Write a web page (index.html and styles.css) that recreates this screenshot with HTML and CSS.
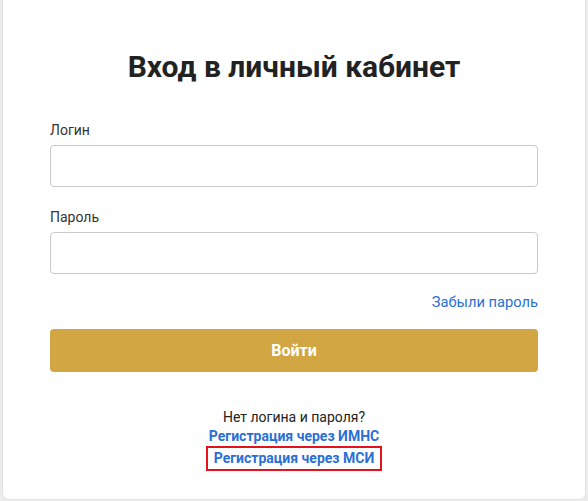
FILE: index.html
```html
<!DOCTYPE html>
<html lang="ru">
<head>
    <meta charset="UTF-8">
    <meta name="viewport" content="width=device-width, initial-scale=1.0">
    <title>Вход в личный кабинет</title>
    <link rel="stylesheet" href="styles.css">
</head>
<body>
    <div class="card">
        <h1 class="titulo">Вход в личный кабинет</h1>
        <form action="#" id="form-login">
            <div class="caja">
                <label for="login">Логин</label>
                <input type="text" id="login" name="login">
            </div>
            <div class="caja">
                <label for="password">Пароль</label>
                <input type="password" id="password" name="password">
            </div>
            <div class="olvido">
                <a href="#">Забыли пароль</a>
            </div>
            <button type="submit" class="btn-entrar">Войти</button>
        </form>
        <div class="registro">
            <p>Нет логина и пароля?</p>
            <a href="#" class="link-reg">Регистрация через ИМНС</a>
            <a href="#" class="link-reg marcado">Регистрация через МСИ</a>
        </div>
    </div>
</body>
</html>
```

FILE: styles.css
```css
*{
    margin: 0px;
    padding: 0px;
    box-sizing: border-box;
}
body{
    font-family: Roboto, "Liberation Sans", sans-serif;
    background: #ececec;
    padding: 0px 2px 2px 2px;
    overflow: hidden;
}
.card{
    margin-top: -8px;
    height: 508px;
    background: #fff;
    border: 1px solid #e2e2e2;
    border-radius: 7px;
    padding: 0px 47px 0px 47px;
}
.titulo{
    text-align: center;
    font-size: 30px;
    font-weight: bold;
    color: #222;
    margin-top: 56px;
    height: 73px;
}
#form-login{
    display: flex;
    flex-direction: column;
}
.caja{
    display: flex;
    flex-direction: column;
    margin-bottom: 22px;
}
.caja + .caja{
    margin-bottom: 19px;
}
.caja label{
    font-size: 14px;
    color: #333;
    height: 23px;
}
.caja input{
    height: 42px;
    border: 1px solid #c9c9c9;
    border-radius: 4px;
    font-size: 14px;
    padding: 0px 10px;
}
.olvido{
    text-align: right;
    margin-top: -1px;
    height: 37px;
}
a{
    color: #2a6fd6;
    text-decoration: none;
    font-size: 14px;
}
.olvido a{
    font-size: 14.7px;
}
.btn-entrar{
    height: 43px;
    background: #d2a643;
    border: none;
    border-radius: 4px;
    color: #fff;
    font-family: Roboto, "Liberation Sans", sans-serif;
    font-size: 16px;
    font-weight: bold;
}
.registro{
    display: flex;
    flex-direction: column;
    align-items: center;
    margin-top: 35px;
    font-size: 14px;
    color: #222;
}
.registro p{
    line-height: 20px;
}
.link-reg{
    font-weight: bold;
    line-height: 18px;
}
.marcado{
    border: 2px solid #e3121b;
    padding: 1px 6px 2px 6px;
    margin-top: 1px;
}
```
